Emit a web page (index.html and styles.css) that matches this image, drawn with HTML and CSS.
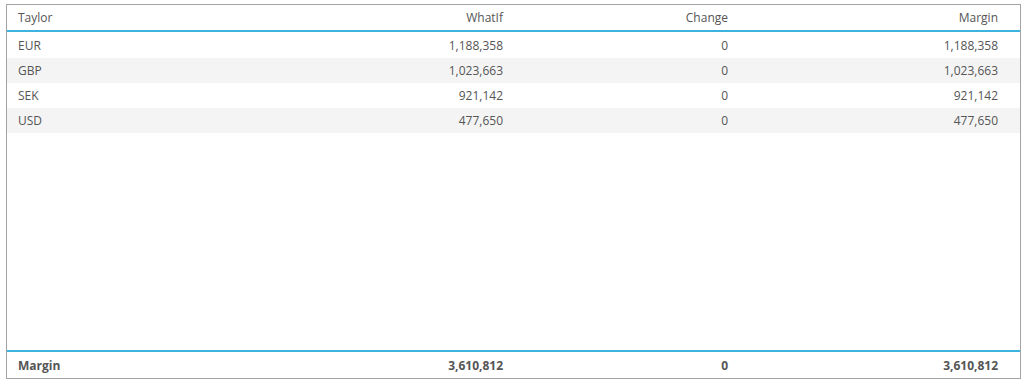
FILE: index.html
```html
<!DOCTYPE html>
<html>
<head>
<meta charset="utf-8">
<link rel="stylesheet" href="styles.css">
</head>
<body>
<div class="grid">
  <div class="head row">
    <div class="cell left">Taylor</div>
    <div class="cell">WhatIf</div>
    <div class="cell">Change</div>
    <div class="cell">Margin</div>
  </div>
  <div class="body">
    <div class="row">
      <div class="cell left">EUR</div><div class="cell">1,188,358</div><div class="cell">0</div><div class="cell">1,188,358</div>
    </div>
    <div class="row alt">
      <div class="cell left">GBP</div><div class="cell">1,023,663</div><div class="cell">0</div><div class="cell">1,023,663</div>
    </div>
    <div class="row">
      <div class="cell left">SEK</div><div class="cell">921,142</div><div class="cell">0</div><div class="cell">921,142</div>
    </div>
    <div class="row alt">
      <div class="cell left">USD</div><div class="cell">477,650</div><div class="cell">0</div><div class="cell">477,650</div>
    </div>
  </div>
  <div class="foot row">
    <div class="cell left">Margin</div><div class="cell">3,610,812</div><div class="cell">0</div><div class="cell">3,610,812</div>
  </div>
</div>
</body>
</html>
```
FILE: styles.css
```css
html, body {
  margin: 0;
  padding: 0;
  background: #fff;
}
body {
  padding: 4px 4px 0 6px;
  font-family: "Open Sans", "Liberation Sans", sans-serif;
  font-size: 12px;
  color: #555;
}
.grid {
  width: 1013px;
  height: 373px;
  border: 1px solid #a3a3a3;
  display: flex;
  flex-direction: column;
  box-sizing: content-box;
}
.row {
  display: grid;
  grid-template-columns: 240px 267px 225px 270px;
  padding-right: 11px;
  height: 25px;
  align-items: center;
  box-sizing: content-box;
}
.cell {
  text-align: right;
  padding-right: 11px;
  white-space: nowrap;
}
.cell.left {
  text-align: left;
  padding-left: 11px;
}
.head {
  height: 25px;
  border-bottom: 2px solid #3db4e0;
}
.body {
  flex: 1;
  padding-top: 1px;
}
.alt {
  background: #f4f4f4;
}
.foot {
  border-top: 2px solid #3db4e0;
  height: 26px;
  font-weight: bold;
}
```
